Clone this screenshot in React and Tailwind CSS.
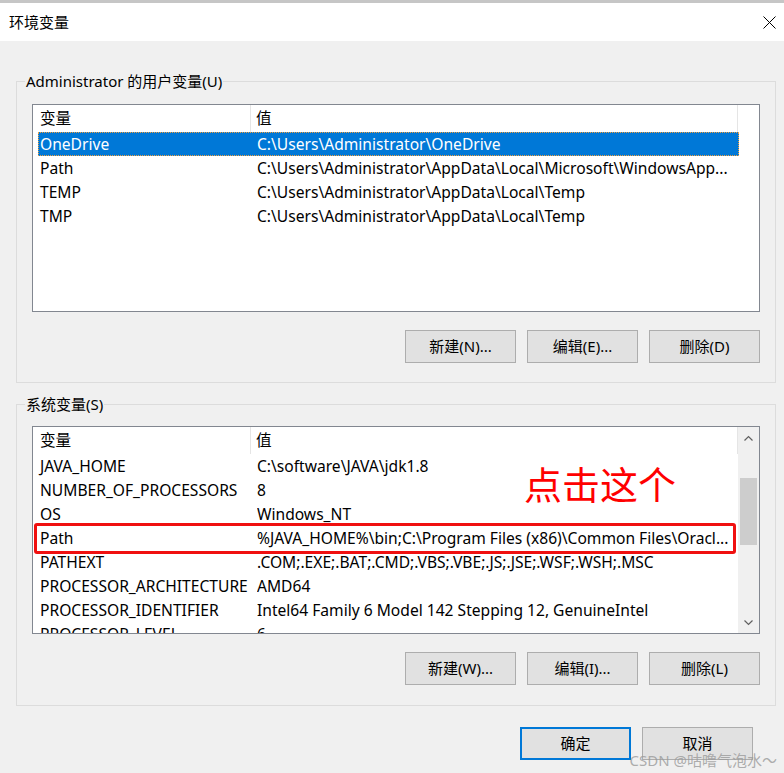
import React from "react";

const userVars = [
  ["OneDrive", "C:\\Users\\Administrator\\OneDrive"],
  ["Path", "C:\\Users\\Administrator\\AppData\\Local\\Microsoft\\WindowsApp..."],
  ["TEMP", "C:\\Users\\Administrator\\AppData\\Local\\Temp"],
  ["TMP", "C:\\Users\\Administrator\\AppData\\Local\\Temp"],
];

const sysVars = [
  ["JAVA_HOME", "C:\\software\\JAVA\\jdk1.8"],
  ["NUMBER_OF_PROCESSORS", "8"],
  ["OS", "Windows_NT"],
  ["Path", "%JAVA_HOME%\\bin;C:\\Program Files (x86)\\Common Files\\Oracl..."],
  ["PATHEXT", ".COM;.EXE;.BAT;.CMD;.VBS;.VBE;.JS;.JSE;.WSF;.WSH;.MSC"],
  ["PROCESSOR_ARCHITECTURE", "AMD64"],
  ["PROCESSOR_IDENTIFIER", "Intel64 Family 6 Model 142 Stepping 12, GenuineIntel"],
  ["PROCESSOR_LEVEL", "6"],
];

function WinButton({ children, primary }) {
  return (
    <button
      className={`w-[111px] h-[33px] bg-[#e1e1e1] text-[15px] text-black ${
        primary ? "border-2 border-[#0078d7]" : "border border-[#adadad]"
      }`}
    >
      {children}
    </button>
  );
}

function Chevron({ up }) {
  return (
    <svg width="9" height="6" viewBox="0 0 9 6" className="text-[#606060]">
      <path
        d={up ? "M0.5 5.5 L4.5 1.5 L8.5 5.5" : "M0.5 0.5 L4.5 4.5 L8.5 0.5"}
        fill="none"
        stroke="currentColor"
        strokeWidth="1.2"
      />
    </svg>
  );
}

function ListBox({ rows, selected, scroll, children }) {
  return (
    <div className="relative h-[208px] border border-[#828790] bg-white flex text-[15.6px]">
      <div className="flex-1 flex flex-col overflow-hidden">
        {/* header */}
        <div className="h-[27px] flex shrink-0">
          <div className="w-[218px] border-r border-[#e5e5e5] pl-[7px] pt-[1px] flex items-center">变量</div>
          <div className="w-[487px] border-r border-[#e5e5e5] pl-[5px] pt-[1px] flex items-center">值</div>
        </div>
        <div className="pl-[5px]">
          {rows.map(([name, value], i) => (
            <div
              key={name + i}
              className={`h-[24px] w-[701px] grid grid-cols-[219px_1fr] items-center whitespace-nowrap pt-[1px] ${
                selected === i
                  ? "bg-[#0078d7] text-white outline-1 outline-dotted outline-[#f0a040] -outline-offset-1"
                  : ""
              }`}
            >
              <span className="pl-[2px] overflow-hidden">{name}</span>
              <span className="overflow-hidden">{value}</span>
            </div>
          ))}
        </div>
      </div>
      {scroll && (
        <div className="w-[21px] bg-[#f0f0f0] flex flex-col items-center shrink-0">
          <div className="h-[21px] flex items-center justify-center">
            <Chevron up />
          </div>
          <div className="h-[30px]" />
          <div className="w-[17px] h-[67px] bg-[#cdcdcd]" />
          <div className="flex-1" />
          <div className="h-[21px] flex items-center justify-center">
            <Chevron />
          </div>
        </div>
      )}
      {children}
    </div>
  );
}

function Group({ label, children, className = "" }) {
  return (
    <div className={`border border-[#dcdcdc] px-[15px] ${className}`}>
      <div className="-mt-[11px] -ml-[7px] w-fit px-[1px] bg-[#f0f0f0] text-[15px] leading-[20px]">
        {label}
      </div>
      {children}
    </div>
  );
}

export default function App() {
  return (
    <div className="relative w-[784px] h-[773px] overflow-hidden bg-[#f0f0f0] text-[15px] text-black font-['Segoe_UI','Noto_Sans','Noto_Sans_CJK_SC',sans-serif]">
      {/* Title bar */}
      <div className="h-[41px] bg-white border-t-[3px] border-[#c6c6c6] flex items-center justify-between pl-[9px] pr-[7px]">
        <span className="text-[15px]">环境变量</span>
        <svg width="13" height="13" viewBox="0 0 13 13" className="mr-[1px]">
          <path d="M0.5 0.5 L12.5 12.5 M12.5 0.5 L0.5 12.5" stroke="#000" strokeWidth="1" />
        </svg>
      </div>

      <div className="pl-[16px] pr-[8px]">
        <Group label="Administrator 的用户变量(U)" className="mt-[40px] pb-[19px]">
          <div className="mt-[13px]">
            <ListBox rows={userVars} selected={0} />
          </div>
          <div className="flex justify-end gap-[11px] mt-[18px]">
            <WinButton>新建(N)...</WinButton>
            <WinButton>编辑(E)...</WinButton>
            <WinButton>删除(D)</WinButton>
          </div>
        </Group>

        <Group label="系统变量(S)" className="mt-[21px] pb-[20px]">
          <div className="mt-[12px]">
            <ListBox rows={sysVars} scroll>
              <div className="absolute left-[1px] top-[96px] w-[702px] h-[31px] border-[3px] border-[#f01010] rounded-[3px]" />
              <div className="absolute left-[491px] top-[35px] text-[38px] leading-[42px] text-[#ff0000] font-['Noto_Sans_CJK_SC',sans-serif]">
                点击这个
              </div>
            </ListBox>
          </div>
          <div className="flex justify-end gap-[11px] mt-[18px]">
            <WinButton>新建(W)...</WinButton>
            <WinButton>编辑(I)...</WinButton>
            <WinButton>删除(L)</WinButton>
          </div>
        </Group>
      </div>

      <div className="flex justify-end gap-[11px] pr-[31px] mt-[21px]">
        <WinButton primary>确定</WinButton>
        <WinButton>取消</WinButton>
      </div>

      {/* watermark */}
      <div className="absolute right-[7px] top-[750px] text-[15px] leading-[20px] text-[#9a9a9a]/80 whitespace-nowrap">
        CSDN @咕噜气泡水～
      </div>
    </div>
  );
}
